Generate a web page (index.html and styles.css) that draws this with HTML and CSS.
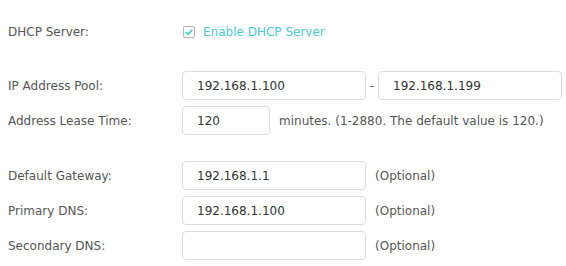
FILE: index.html
```html
<!DOCTYPE html>
<html lang="en">
<head>
    <meta charset="UTF-8">
    <title>DHCP Server</title>
    <link rel="stylesheet" href="styles.css">
</head>
<body>
    <form class="dhcp-form">
        <div class="form-row row-first">
            <label class="row-label">DHCP Server:</label>
            <label class="check-label">
                <span class="check-box">
                    <svg width="10" height="10" viewBox="0 0 10 10"><path d="M2 5.2 L4.2 7.2 L8.2 2.8" fill="none" stroke="#4acbd6" stroke-width="1.8"/></svg>
                </span>
                Enable DHCP Server
            </label>
        </div>

        <div class="form-group">
            <div class="form-row">
                <label class="row-label">IP Address Pool:</label>
                <input class="text-input" type="text" value="192.168.1.100">
                <span class="dash">-</span>
                <input class="text-input" type="text" value="192.168.1.199">
            </div>
            <div class="form-row">
                <label class="row-label">Address Lease Time:</label>
                <input class="text-input short" type="text" value="120">
                <span class="hint">minutes. (1-2880. The default value is 120.)</span>
            </div>
        </div>

        <div class="form-group">
            <div class="form-row">
                <label class="row-label">Default Gateway:</label>
                <input class="text-input" type="text" value="192.168.1.1">
                <span class="hint">(Optional)</span>
            </div>
            <div class="form-row">
                <label class="row-label">Primary DNS:</label>
                <input class="text-input" type="text" value="192.168.1.100">
                <span class="hint">(Optional)</span>
            </div>
            <div class="form-row">
                <label class="row-label">Secondary DNS:</label>
                <input class="text-input" type="text" value="">
                <span class="hint">(Optional)</span>
            </div>
        </div>
    </form>
</body>
</html>
```

FILE: styles.css
```css
* {
    box-sizing: border-box;
    margin: 0;
    padding: 0;
}

body {
    font-family: "DejaVu Sans", sans-serif;
    font-size: 12px;
    color: #555;
    background-color: #fff;
    padding: 17px 0 0 8px;
}

.form-group {
    display: flex;
    flex-direction: column;
    gap: 6px;
    margin-bottom: 26px;
}

.form-group:last-child {
    margin-bottom: 0;
}

.form-row {
    display: flex;
    align-items: center;
    height: 29px;
}

.row-first {
    margin-bottom: 25px;
}

.row-label {
    width: 174px;
    flex-shrink: 0;
}

.check-label {
    display: flex;
    align-items: center;
    color: #4acbd6;
    cursor: pointer;
}

.check-box {
    display: inline-flex;
    align-items: center;
    justify-content: center;
    width: 12px;
    height: 12px;
    border: 1px solid #b3b3b3;
    border-radius: 2px;
    margin: 0 8px 0 1px;
}

.text-input {
    width: 184px;
    height: 29px;
    padding: 0 14px;
    border: 1px solid #dcdcdc;
    border-radius: 4px;
    font-family: inherit;
    font-size: 12px;
    color: #333;
    background-color: #fff;
}

.text-input:focus {
    outline: none;
    border-color: #4acbd6;
}

.text-input.short {
    width: 88px;
}

.dash {
    width: 12px;
    text-align: center;
}

.hint {
    margin-left: 9px;
}
```
